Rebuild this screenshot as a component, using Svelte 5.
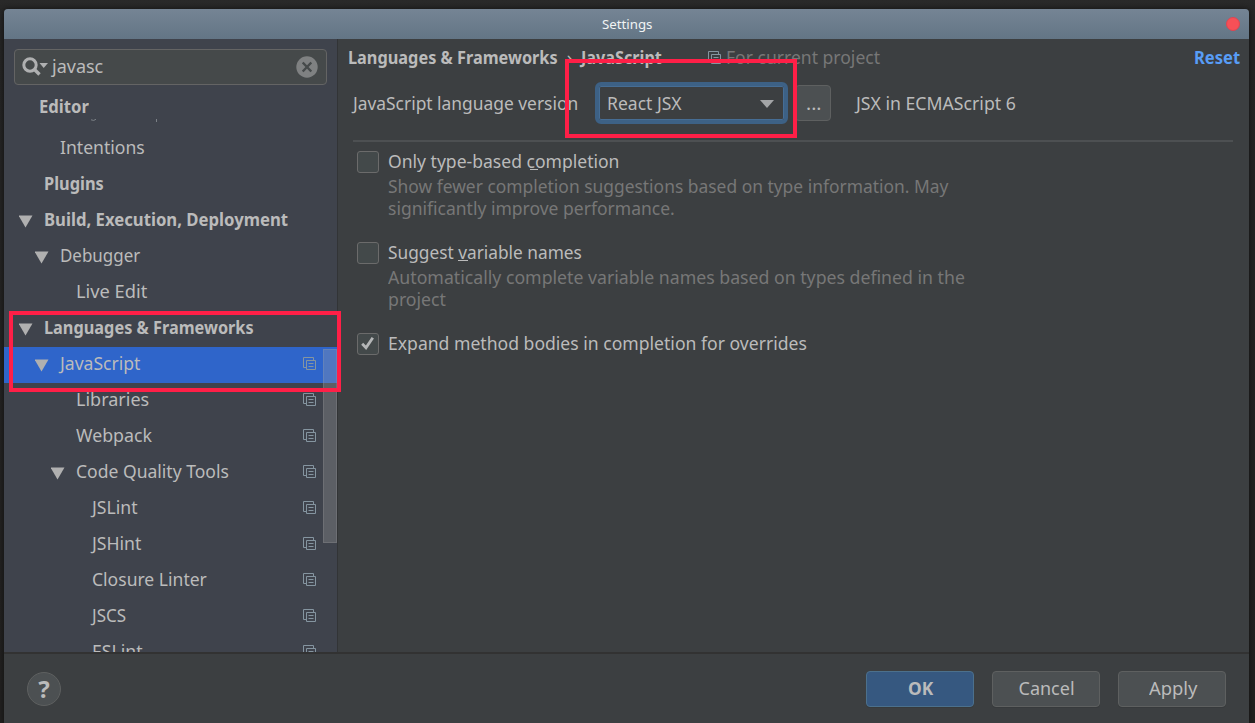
<script>
  const rows = [
    { label: 'Intentions', indent: 56, width: 85 },
    { label: 'Plugins', indent: 40, width: 60, bold: true },
    { label: 'Build, Execution, Deployment', indent: 40, width: 244, bold: true, arrow: 15 },
    { label: 'Debugger', indent: 56, width: 80, arrow: 31 },
    { label: 'Live Edit', indent: 72, width: 71 },
    { label: 'Languages & Frameworks', indent: 40, width: 210, bold: true, arrow: 15 },
    { label: 'JavaScript', indent: 56, width: 80, arrow: 31, copy: true, selected: true },
    { label: 'Libraries', indent: 72, width: 73, copy: true },
    { label: 'Webpack', indent: 72, width: 76, copy: true },
    { label: 'Code Quality Tools', indent: 72, width: 153, arrow: 47, copy: true },
    { label: 'JSLint', indent: 88, width: 46, copy: true },
    { label: 'JSHint', indent: 88, width: 49, copy: true },
    { label: 'Closure Linter', indent: 88, width: 115, copy: true },
    { label: 'JSCS', indent: 88, width: 34, copy: true },
    { label: 'ESLint', indent: 88, width: 51, copy: true }
  ];

  function fit(node, width) {
    const natural = node.offsetWidth;
    if (natural) node.style.transform = `scaleX(${width / natural})`;
  }
</script>

{#snippet text(value, width)}
  <span class="text" style="width:{width}px"><span class="run" use:fit={width}>{value}</span></span>
{/snippet}

{#snippet copyIcon()}
  <svg class="copy" width="13" height="13" viewBox="0 0 13 13" fill="none" stroke="currentColor">
    <path d="M3 10.5H.5V.5H10.5V3" />
    <path d="M3.5 3.5H12.5V12.5H3.5ZM5.5 6.5H10.5M5.5 9.5H10.5" />
  </svg>
{/snippet}

<main class="desktop">
  <section class="window">
    <header class="titlebar">
      <span></span>
      <span class="title">{@render text('Settings', 50)}</span>
      <i class="close"></i>
    </header>
    <div class="content">
      <aside class="sidebar">
        <div class="search">
          <svg class="lens" width="27" height="20" viewBox="0 0 27 20">
            <circle cx="8" cy="8" r="6.2" fill="none" stroke="#afb0b1" stroke-width="3" />
            <path d="M12 12L17.5 17.5" stroke="#afb0b1" stroke-width="3.4" />
            <path d="M17.5 6H26L21.7 11Z" fill="#afb0b1" />
          </svg>
          <span class="query">{@render text('javasc', 51)}</span>
          <svg class="clear" width="22" height="22" viewBox="0 0 22 22">
            <circle cx="11" cy="11" r="10.7" fill="#7f8182" />
            <path d="M6.7 6.5L15.3 15.5M15.3 6.5L6.7 15.5" stroke="#464a4b" stroke-width="2.4" />
          </svg>
        </div>
        <div class="sticky">
          {@render text('Editor', 50)}
          <svg width="75" height="5" viewBox="0 0 75 5" fill="none" stroke="#7b8086">
            <path d="M2 .8Q5 2.4 7 .2M67.5 0V3" />
          </svg>
        </div>
        <div class="tree">
          {#each rows as row}
            <div class="row" class:bold={row.bold} class:selected={row.selected}>
              <span class="gutter" style="width:{row.indent}px">
                {#if row.arrow}
                  <svg style="margin-left:{row.arrow}px" width="14" height="13" viewBox="0 0 14 13"><path d="M-.5 .5H13.5L6.5 12.5Z" fill="#b0b0b0" /></svg>
                {/if}
              </span>
              {@render text(row.label, row.width)}
              {#if row.copy}{@render copyIcon()}{/if}
            </div>
          {/each}
          <i class="scroll"></i>
        </div>
      </aside>
      <section class="page">
        <div class="crumbs">
          <b>{@render text('Languages & Frameworks', 210)}</b>
          <span class="chevron">›</span>
          <b>{@render text('JavaScript', 81)}</b>
          <span class="project">{@render copyIcon()}{@render text('For current project', 154)}</span>
          <b class="reset">{@render text('Reset', 46)}</b>
        </div>
        <div class="version">
          {@render text('JavaScript language version', 225)}
          <div class="select">
            {@render text('React JSX', 75)}
            <svg width="14" height="8" viewBox="0 0 14 8"><path d="M0 0H14L7 8Z" fill="#a3a5a7" /></svg>
          </div>
          <div class="more">{@render text('...', 15)}</div>
          <span class="hint">{@render text('JSX in ECMAScript 6', 160)}</span>
        </div>
        <div class="option first">
          <i class="box"></i>
          <div>
            <p class="label">{@render text('Only type-based completion', 231)}<i class="mnemonic" style="left:142px;width:8px"></i></p>
            <p class="desc">{@render text('Show fewer completion suggestions based on type information. May', 560)}</p>
            <p class="desc">{@render text('significantly improve performance.', 287)}</p>
          </div>
        </div>
        <div class="option">
          <i class="box"></i>
          <div>
            <p class="label">{@render text('Suggest variable names', 194)}<i class="mnemonic" style="left:70px;width:10px"></i></p>
            <p class="desc">{@render text('Automatically complete variable names based on types defined in the', 577)}</p>
            <p class="desc">{@render text('project', 58)}</p>
          </div>
        </div>
        <div class="option">
          <i class="box">
            <svg width="19" height="19" viewBox="0 0 19 19"><path d="M4.2 9.8L8 13.8L14.8 3.8" fill="none" stroke="#b4b6b7" stroke-width="2.8" /></svg>
          </i>
          <div><p class="label">{@render text('Expand method bodies in completion for overrides', 419)}</p></div>
        </div>
      </section>
    </div>
    <footer>
      <div class="help">?</div>
      <div class="button primary">{@render text('OK', 25)}</div>
      <div class="button">{@render text('Cancel', 56)}</div>
      <div class="button">{@render text('Apply', 48)}</div>
    </footer>
  </section>
  <i class="mark combo"></i>
  <i class="mark branch"></i>
</main>

<style>
  :global(body) { background: #242424; }
  .desktop {
    position: relative; box-sizing: border-box; width: 1255px; height: 723px; padding: 9px 6px 0 4px; overflow: hidden;
    background: linear-gradient(#292929, #242424 30px, #21201f);
    font: 18px/24px 'Noto Sans', sans-serif; color: #bbb;
  }
  .window {
    display: flex; flex-direction: column; height: 714px; overflow: hidden;
    border-radius: 4px 4px 0 0; background: #3c3f41; box-shadow: 0 0 5px #111;
  }
  .titlebar {
    flex: none; box-sizing: border-box; display: grid; grid-template-columns: 1fr auto 1fr; align-items: center;
    height: 30px; padding: 0 9px; background: linear-gradient(#758494, #637585); color: #f1f3f4; font-size: 13px;
  }
  .close { justify-self: end; box-sizing: border-box; width: 14px; height: 14px; border: 1px solid #e04450; border-radius: 50%; background: #f65057; }
  .text { display: inline-block; flex: none; white-space: nowrap; }
  .run { display: inline-block; transform-origin: left; }
  .content { display: flex; height: 613px; }
  .sidebar {
    box-sizing: border-box; width: 334px; flex: none; display: flex; flex-direction: column;
    border-right: 1px solid #323436; background: #3f434c; overflow: hidden;
  }
  .search {
    box-sizing: border-box; flex: none; display: flex; align-items: center; height: 36px; margin: 10px 10px 0;
    padding: 0 8px 0 7px; border: 1px solid #646464; border-radius: 4px; background: #45494a;
  }
  .lens { margin-bottom: 1px; }
  .query { margin: 0 0 2px 3px; }
  .clear { margin-left: auto; }
  .sticky { flex: none; height: 46px; padding-left: 35px; font-weight: 700; box-sizing: border-box; line-height: 42px; }
  .sticky .text { display: block; height: 34px; }
  .sticky svg { display: block; margin: 0 0 0 50px; }
  .tree { position: relative; flex: 1; overflow: hidden; }
  .row { display: flex; align-items: center; height: 36px; }
  .row > .text { margin-bottom: 4px; }
  .bold { font-weight: 700; }
  .selected { background: #2f65ca; }
  .gutter { flex: none; display: flex; align-items: center; box-sizing: border-box; }
  .gutter svg { flex: none; }
  .copy { flex: none; color: #8595a0; }
  .row .copy { margin: 0 21px 3px auto; }
  .scroll { position: absolute; right: 0; top: 218px; width: 14px; height: 194px; box-sizing: border-box; border: 1px solid #a6a6a63a; background: #a6a6a648; }
  .page { flex: 1; padding: 6px 16px 0 10px; }
  .crumbs { display: flex; height: 24px; align-items: center; }
  .chevron { width: 23px; text-align: center; font-size: 18px; }
  .project { display: flex; align-items: center; gap: 5px; margin-left: 46px; color: #777; }
  .reset { margin: 0 -7px 0 auto; color: #589df6; }
  .version {
    display: flex; align-items: center; height: 73px; padding-bottom: 4px; margin: 0 0 0 5px;
    box-sizing: border-box; border-bottom: 2px solid #4d5052;
  }
  .select {
    box-sizing: border-box; display: flex; align-items: center; justify-content: space-between; width: 193px; height: 42px;
    margin-left: 17px; padding: 0 10px 0 8px; border: 4px solid #3d6185; border-radius: 6px; box-shadow: inset 0 0 0 1px #466d94;
  }
  .select svg { margin-top: 3px; }
  .more {
    box-sizing: border-box; width: 36px; height: 36px; margin-left: 7px; border: 1px solid #5e6060; border-radius: 4px;
    background: #4c5052; text-align: center; line-height: 34px;
  }
  .hint { margin-left: 25px; }
  .option { display: flex; gap: 9px; margin-left: 9px; min-height: 91px; }
  .first { margin-top: 6px; }
  .box { box-sizing: border-box; flex: none; width: 22px; height: 22px; margin-top: 3px; border: 1px solid #6b6b6b; border-radius: 3px; background: #43494a; }
  .box svg { display: block; }
  p { margin: 0; }
  .label { position: relative; height: 27px; line-height: 26px; }
  .mnemonic { position: absolute; top: 21px; height: 1px; background: #bbb; }
  .desc { height: 22px; line-height: 22px; color: #777; }
  footer {
    flex: 1; display: flex; align-items: center; box-sizing: border-box; padding: 0 23px; gap: 18px;
    border-top: 2px solid #323232;
  }
  .help {
    box-sizing: border-box; width: 34px; height: 34px; margin-right: auto; border: 1px solid #5e6060; border-radius: 50%;
    background: #4c5052; text-align: center; font: 700 24px/32px 'Noto Sans', sans-serif;
  }
  .button {
    box-sizing: border-box; width: 108px; height: 36px; padding-left: 1px; border: 1px solid #5e6060; border-radius: 4px;
    background: #4c5052; text-align: center; line-height: 33px; box-shadow: 0 1px #373a3c;
  }
  .primary { border-color: #4c708c; background: #365880; font-weight: 700; }
  .mark { position: absolute; box-sizing: border-box; border: 4px solid #ff1f47; }
  .combo { left: 565px; top: 59px; width: 232px; height: 79px; }
  .branch { left: 9px; top: 311px; width: 332px; height: 81px; }
</style>
